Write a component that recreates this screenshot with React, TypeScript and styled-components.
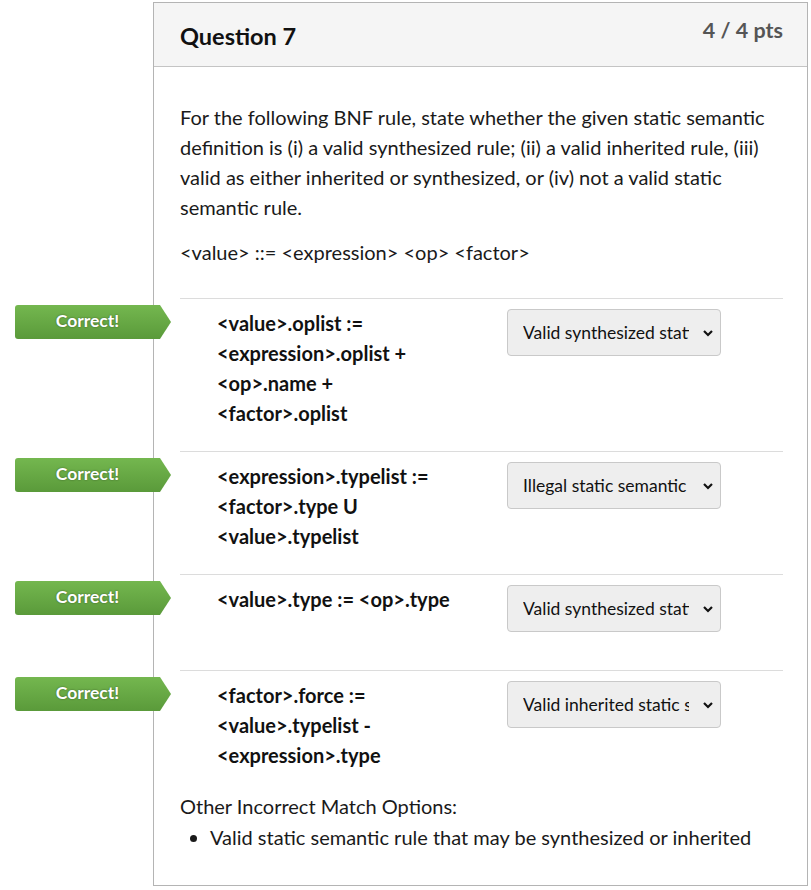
import React from "react";
import styled, { createGlobalStyle } from "styled-components";

const Global = createGlobalStyle`
  html, body { margin: 0; padding: 0; background: #fff; }
  body { font-family: Lato, "Noto Sans", sans-serif; color: #1a1a1a; }
  * { box-sizing: border-box; }
`;

const Page = styled.div`
  padding: 2px 0 0 153px;
`;

const Card = styled.div`
  width: 655px;
  border: 1px solid #b4b4b4;
  background: #fff;
`;

const Header = styled.div`
  height: 64px;
  background: #f5f5f5;
  border-bottom: 1px solid #c4c4c4;
  display: flex;
  justify-content: space-between;
  align-items: flex-start;
  padding: 0 24px 0 26px;
`;

const Title = styled.h2`
  margin: 19px 0 0;
  font-size: 23.5px;
  font-weight: 700;
  color: #111;
`;

const Points = styled.div`
  margin-top: 14px;
  font-size: 21.5px;
  font-weight: 700;
  color: #555;
`;

const Body = styled.div`
  padding: 35px 24px 33px 26px;
`;

const Text = styled.p<{ $gap?: number }>`
  margin: 0 0 ${(p) => p.$gap ?? 0}px;
  font-size: 20px;
  line-height: 30px;
`;

const Row = styled.div`
  position: relative;
  display: flex;
  align-items: flex-start;
  border-top: 1px solid #dcdcdc;
  padding: 9px 0 23px 37px;
`;

const Rule = styled.div`
  width: 290px;
  font-size: 20px;
  font-weight: 700;
  line-height: 30px;
  color: #111;
`;

const SelectBox = styled.div`
  position: relative;
  width: 214px;
  height: 47px;
  margin: 1px 0 15px;
  background: #eeeeee;
  border: 1px solid #c9c9c9;
  border-radius: 4px;
  display: flex;
  align-items: center;
  padding: 0 0 0 15px;
  font-size: 17.5px;
  color: #111;
  overflow: hidden;
  white-space: nowrap;
`;

const SelectLabel = styled.span`
  width: 166px;
  overflow: hidden;
`;

const Chevron = styled.svg`
  position: absolute;
  right: 6px;
  top: 18px;
`;

const Badge = styled.div`
  position: absolute;
  left: -165px;
  top: 6px;
  width: 156px;
  height: 34px;
  background: linear-gradient(#74b74f, #5a9a3a);
  clip-path: polygon(0 0, 145px 0, 156px 50%, 145px 100%, 0 100%);
  border-radius: 3px 0 0 3px;
  display: flex;
  align-items: center;
`;

const BadgeText = styled.span`
  width: 145px;
  text-align: center;
  color: #fff;
  font-size: 17.5px;
  font-weight: 700;
  text-shadow: 0 0 2px rgba(0, 0, 0, 0.45);
  margin-top: -4px;
`;

const Other = styled.div`
  margin-top: -2px;
  font-size: 20px;
  line-height: 30px;
`;

const List = styled.ul`
  margin: 1px 0 0;
  padding-left: 30px;
  font-size: 20px;
  line-height: 30px;
`;

const rows = [
  {
    lines: ["<value>.oplist :=", "<expression>.oplist +", "<op>.name +", "<factor>.oplist"],
    sel: "Valid synthesized static semantic rule",
  },
  {
    lines: ["<expression>.typelist :=", "<factor>.type U", "<value>.typelist"],
    sel: "Illegal static semantic rule",
  },
  { lines: ["<value>.type := <op>.type"], sel: "Valid synthesized static semantic rule" },
  {
    lines: ["<factor>.force :=", "<value>.typelist -", "<expression>.type"],
    sel: "Valid inherited static semantic rule",
  },
];

export default function App() {
  return (
    <Page>
      <Global />
      <Card>
        <Header>
          <Title>Question 7</Title>
          <Points>4 / 4 pts</Points>
        </Header>
        <Body>
          <Text $gap={15}>
            For the following BNF rule, state whether the given static semantic definition is (i) a
            valid synthesized rule; (ii) a valid inherited rule, (iii) valid as either inherited or
            synthesized, or (iv) not a valid static semantic rule.
          </Text>
          <Text $gap={31}>{"<value> ::= <expression> <op> <factor>"}</Text>
          {rows.map((r, i) => (
            <Row key={i}>
              <Badge>
                <BadgeText>Correct!</BadgeText>
              </Badge>
              <Rule>
                {r.lines.map((l, j) => (
                  <div key={j}>{l}</div>
                ))}
              </Rule>
              <SelectBox>
                <SelectLabel>{r.sel}</SelectLabel>
                <Chevron width="12" height="10" viewBox="0 0 12 10">
                  <path d="M2 3 L6 7 L10 3" fill="none" stroke="#111" strokeWidth="2.2" />
                </Chevron>
              </SelectBox>
            </Row>
          ))}
          <Other>Other Incorrect Match Options:</Other>
          <List>
            <li>Valid static semantic rule that may be synthesized or inherited</li>
          </List>
        </Body>
      </Card>
    </Page>
  );
}
